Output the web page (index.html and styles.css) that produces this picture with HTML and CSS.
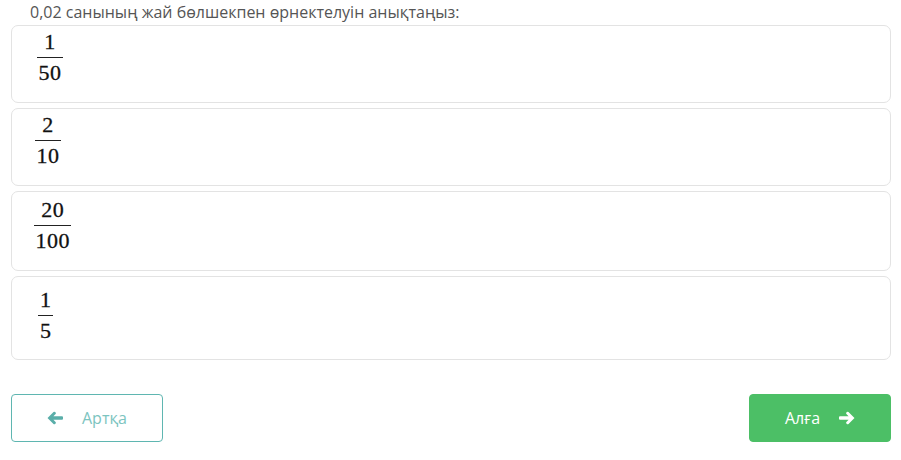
FILE: index.html
```html
<!DOCTYPE html>
<html lang="kk">
<head>
<meta charset="utf-8">
<link rel="stylesheet" href="styles.css">
</head>
<body>
<div class="page">
  <div class="question">0,02 санының жай бөлшекпен өрнектелуін анықтаңыз:</div>
  <div class="answers">
    <div class="card c1"><span class="frac"><span class="num">1</span><span class="den">50</span></span></div>
    <div class="card c2"><span class="frac"><span class="num">2</span><span class="den">10</span></span></div>
    <div class="card c3"><span class="frac"><span class="num">20</span><span class="den">100</span></span></div>
    <div class="card c4"><span class="frac"><span class="num">1</span><span class="den">5</span></span></div>
  </div>
  <div class="nav">
    <button class="btn back"><svg class="ico" viewBox="0 0 16 14"><path d="M0.5 7 L6.5 1 Q7.3 0.3 8.1 1 L8.6 1.5 Q9.3 2.3 8.6 3.1 L6.4 5.2 H15 Q16 5.2 16 6.2 V7.8 Q16 8.8 15 8.8 H6.4 L8.6 10.9 Q9.3 11.7 8.6 12.5 L8.1 13 Q7.3 13.7 6.5 13 Z"/></svg><span>Артқа</span></button>
    <button class="btn next"><span>Алға</span><svg class="ico" viewBox="0 0 16 14"><path d="M15.5 7 L9.5 1 Q8.7 0.3 7.9 1 L7.4 1.5 Q6.7 2.3 7.4 3.1 L9.6 5.2 H1 Q0 5.2 0 6.2 V7.8 Q0 8.8 1 8.8 H9.6 L7.4 10.9 Q6.7 11.7 7.4 12.5 L7.9 13 Q8.7 13.7 9.5 13 Z"/></svg></button>
  </div>
</div>
</body>
</html>
```

FILE: styles.css
```css
* { box-sizing: border-box; }
html, body { margin: 0; padding: 0; background: #fff; }
body { font-family: "Open Sans", "Liberation Sans", sans-serif; }
.page { padding: 0 10px 0 11px; }
.question {
  font-size: 16px;
  line-height: 22px;
  color: #555;
  padding-left: 19px;
  height: 25px;
  padding-top: 1px;
}
.answers { display: flex; flex-direction: column; gap: 5px; }
.card {
  border: 1px solid #e3e3e3;
  border-radius: 7px;
  padding: 5px 0 0 24px;
  display: flex;
  align-items: flex-start;
}
.c1 { height: 78px; padding-left: 25px; }
.c2 { height: 78px; padding-left: 23px; }
.c3 { height: 80px; padding-left: 22px; padding-top: 7px; }
.c4 { height: 84px; padding-left: 26px; padding-top: 12px; }
.frac {
  display: inline-flex;
  flex-direction: column;
  align-items: stretch;
  text-align: center;
  font-family: "Liberation Serif", "DejaVu Serif", serif;
  font-size: 22px;
  color: #111;
  line-height: 22px;
  -webkit-text-stroke: 0.3px #111;
  letter-spacing: 0.5px;
}
.num { padding: 0 1px 4px 1.5px; border-bottom: 1.5px solid #222; }
.den { padding: 3.5px 1px 0 1.5px; }
.c4 .num, .c4 .den { padding-left: 2px; padding-right: 1.5px; }
.nav {
  display: flex;
  justify-content: space-between;
  margin-top: 34px;
}
.btn {
  height: 48px;
  border-radius: 4px;
  font-family: "Open Sans", "Liberation Sans", sans-serif;
  font-size: 16px;
  display: flex;
  align-items: center;
  justify-content: center;
  gap: 19px;
  padding: 0;
  cursor: pointer;
}
.back {
  width: 152px;
  background: #fff;
  border: 1px solid #5fb6b1;
  color: #7cc4c0;
}
.back .ico { fill: #5aaea9; }
.next {
  width: 142px;
  background: #4cbf66;
  border: 1px solid #4cbf66;
  color: #fff;
}
.next .ico { fill: #fff; }
.ico { width: 16px; height: 14px; }
```
